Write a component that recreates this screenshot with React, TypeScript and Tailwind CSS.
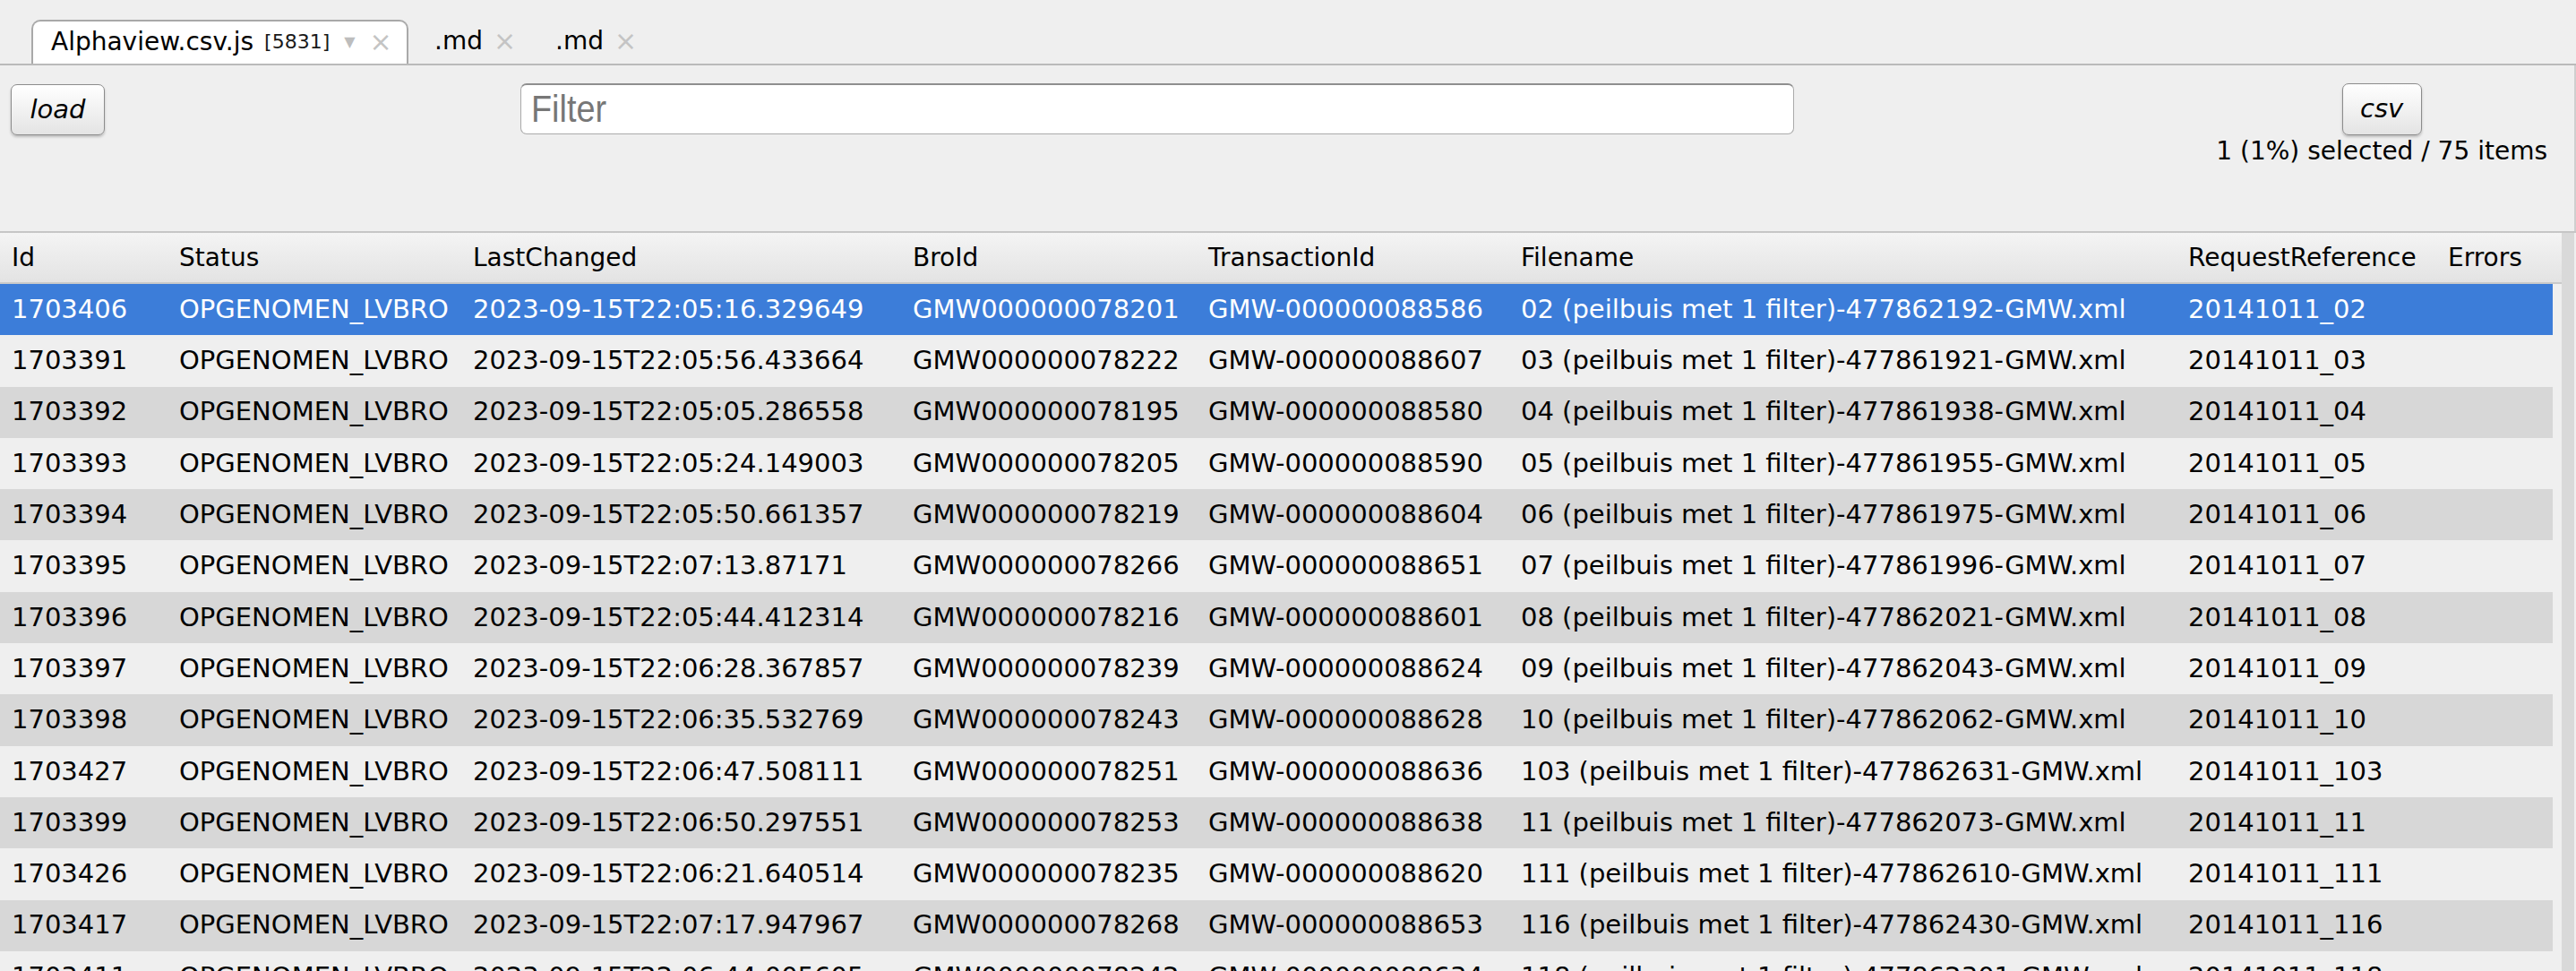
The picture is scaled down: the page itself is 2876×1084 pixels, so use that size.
import React from "react";

type Row = [string, string, string, string, string, string, string];

const rows: Row[] = [
  ["1703406", "OPGENOMEN_LVBRO", "2023-09-15T22:05:16.329649", "GMW000000078201", "GMW-000000088586", "02 (peilbuis met 1 filter)-477862192-GMW.xml", "20141011_02"],
  ["1703391", "OPGENOMEN_LVBRO", "2023-09-15T22:05:56.433664", "GMW000000078222", "GMW-000000088607", "03 (peilbuis met 1 filter)-477861921-GMW.xml", "20141011_03"],
  ["1703392", "OPGENOMEN_LVBRO", "2023-09-15T22:05:05.286558", "GMW000000078195", "GMW-000000088580", "04 (peilbuis met 1 filter)-477861938-GMW.xml", "20141011_04"],
  ["1703393", "OPGENOMEN_LVBRO", "2023-09-15T22:05:24.149003", "GMW000000078205", "GMW-000000088590", "05 (peilbuis met 1 filter)-477861955-GMW.xml", "20141011_05"],
  ["1703394", "OPGENOMEN_LVBRO", "2023-09-15T22:05:50.661357", "GMW000000078219", "GMW-000000088604", "06 (peilbuis met 1 filter)-477861975-GMW.xml", "20141011_06"],
  ["1703395", "OPGENOMEN_LVBRO", "2023-09-15T22:07:13.87171", "GMW000000078266", "GMW-000000088651", "07 (peilbuis met 1 filter)-477861996-GMW.xml", "20141011_07"],
  ["1703396", "OPGENOMEN_LVBRO", "2023-09-15T22:05:44.412314", "GMW000000078216", "GMW-000000088601", "08 (peilbuis met 1 filter)-477862021-GMW.xml", "20141011_08"],
  ["1703397", "OPGENOMEN_LVBRO", "2023-09-15T22:06:28.367857", "GMW000000078239", "GMW-000000088624", "09 (peilbuis met 1 filter)-477862043-GMW.xml", "20141011_09"],
  ["1703398", "OPGENOMEN_LVBRO", "2023-09-15T22:06:35.532769", "GMW000000078243", "GMW-000000088628", "10 (peilbuis met 1 filter)-477862062-GMW.xml", "20141011_10"],
  ["1703427", "OPGENOMEN_LVBRO", "2023-09-15T22:06:47.508111", "GMW000000078251", "GMW-000000088636", "103 (peilbuis met 1 filter)-477862631-GMW.xml", "20141011_103"],
  ["1703399", "OPGENOMEN_LVBRO", "2023-09-15T22:06:50.297551", "GMW000000078253", "GMW-000000088638", "11 (peilbuis met 1 filter)-477862073-GMW.xml", "20141011_11"],
  ["1703426", "OPGENOMEN_LVBRO", "2023-09-15T22:06:21.640514", "GMW000000078235", "GMW-000000088620", "111 (peilbuis met 1 filter)-477862610-GMW.xml", "20141011_111"],
  ["1703417", "OPGENOMEN_LVBRO", "2023-09-15T22:07:17.947967", "GMW000000078268", "GMW-000000088653", "116 (peilbuis met 1 filter)-477862430-GMW.xml", "20141011_116"],
  ["1703411", "OPGENOMEN_LVBRO", "2023-09-15T22:06:44.005605", "GMW000000078242", "GMW-000000088634", "118 (peilbuis met 1 filter)-477862301-GMW.xml", "20141011_118"],
];

const headers = ["Id", "Status", "LastChanged", "BroId", "TransactionId", "Filename", "RequestReference", "Errors"];

const grid = "grid grid-cols-[187px_328px_491px_330px_349px_745px_290px_1fr]";

export default function App() {
  return (
    <div
      className="w-[2876px] h-[1084px] overflow-hidden bg-[#efefef] text-black text-[28px]"
      style={{ fontFamily: '"DejaVu Sans", "Noto Sans", sans-serif' }}
    >
      {/* Tab strip */}
      <div className="h-[71px] flex items-end pl-[35px]">
        <div className="h-[49px] w-[421px] rounded-t-[10px] border-2 border-b-0 border-[#a9a9a9] bg-white flex items-center pl-[20px] pb-[2px]">
          <span className="leading-none">Alphaview.csv.js</span>
          <span className="ml-[12px] text-[22px] text-[#1a1a1a] leading-none">[5831]</span>
          <span className="ml-[16px] text-[#bdbdbd] text-[16px] leading-none">▼</span>
          <span className="ml-[16px] text-[#c4c4c4] text-[30px] leading-none">×</span>
        </div>
        <div className="h-[49px] flex items-center pl-[29px] pb-[2px]">
          <span className="leading-none">.md</span>
          <span className="ml-[12px] text-[#c4c4c4] text-[30px] leading-none">×</span>
        </div>
        <div className="h-[49px] flex items-center pl-[44px] pb-[2px]">
          <span className="leading-none">.md</span>
          <span className="ml-[12px] text-[#c4c4c4] text-[30px] leading-none">×</span>
        </div>
      </div>
      <div className="h-[2px] bg-[#bababa]" />

      {/* Toolbar */}
      <div className="h-[185px] flex items-start pt-[21px] pl-[12px] border-r-2 border-[#cfcfcf]">
        <button className="w-[105px] h-[57px] rounded-[7px] border-[1.5px] border-[#8c8c8c] bg-gradient-to-b from-white to-[#e4e4e4] shadow-[0_2px_3px_rgba(0,0,0,0.22)] italic text-[29px] flex items-center justify-center">
          load
        </button>
        <div className="ml-[464px] -mt-[1px] w-[1422px] h-[57px] rounded-[7px] bg-white border border-[#aaaaaa] border-t-2 border-t-[#8f8f8f] flex items-center pl-[11px]">
          <span
            className="text-[42px] text-[#777] leading-none"
            style={{ fontFamily: '"Liberation Sans", Arial, sans-serif', transform: "scaleX(0.9)", transformOrigin: "left" }}
          >
            Filter
          </span>
        </div>
        <div className="ml-auto mr-[30px] flex flex-col items-center -mt-[1px]">
          <button className="w-[89px] h-[58px] rounded-[7px] border-[1.5px] border-[#8c8c8c] bg-gradient-to-b from-white to-[#e4e4e4] shadow-[0_2px_3px_rgba(0,0,0,0.22)] italic text-[29px] flex items-center justify-center">
            csv
          </button>
          <div className="leading-[36px] whitespace-nowrap">1 (1%) selected / 75 items</div>
        </div>
      </div>
      <div className="h-[2px] bg-[#c6c6c6]" />

      {/* Table */}
      <div className="flex">
        <div className="w-[2860px]">
          <div className={`${grid} h-[57px] items-center bg-gradient-to-b from-[#f4f4f4] to-[#e3e3e3] border-b-2 border-[#cacaca]`}>
            {headers.map((h) => (
              <div key={h} className="pl-[13px] whitespace-nowrap">
                {h}
              </div>
            ))}
          </div>
          {rows.map((r, i) => {
            const bg = i === 0 ? "bg-[#3c7dd9] text-white" : i % 2 === 0 ? "bg-[#d7d7d7]" : "bg-[#efefef]";
            return (
              <div key={r[0]} className={`${grid} h-[57.3px] items-center w-[2850px] text-[29px] ${bg}`}>
                {r.map((c, j) => (
                  <div key={j} className="pl-[13px] whitespace-nowrap">
                    {c}
                  </div>
                ))}
                <div className="pl-[13px]" />
              </div>
            );
          })}
        </div>
        <div className="w-[14px] h-[830px] bg-[#d9d9d9]" />
      </div>
    </div>
  );
}
